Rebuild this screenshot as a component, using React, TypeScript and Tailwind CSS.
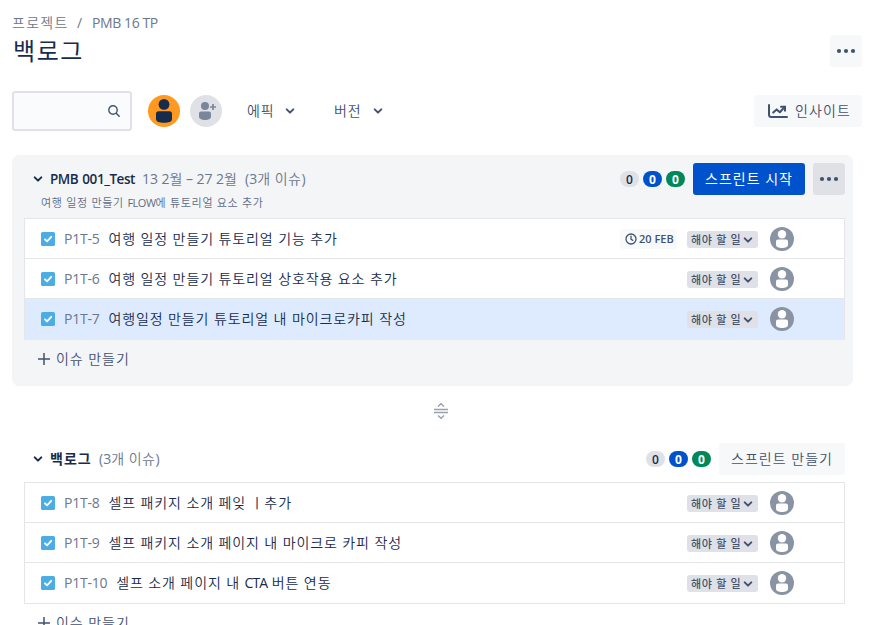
import React from 'react';
import clsx from 'clsx';

interface Issue {
  id: string;
  title: React.ReactNode;
  due?: string;
  selected?: boolean;
}

const sprintIssues: Issue[] = [
  { id: 'P1T-5', title: '여행 일정 만들기 튜토리얼 기능 추가', due: '20 FEB' },
  { id: 'P1T-6', title: '여행 일정 만들기 튜토리얼 상호작용 요소 추가' },
  { id: 'P1T-7', title: '여행일정 만들기 튜토리얼 내 마이크로카피 작성', selected: true },
];

const backlogIssues: Issue[] = [
  { id: 'P1T-8', title: '셀프 패키지 소개 페잊 ㅣ추가' },
  { id: 'P1T-9', title: '셀프 패키지 소개 페이지 내 마이크로 카피 작성' },
  {
    id: 'P1T-10',
    title: (
      <>
        셀프 소개 페이지 내 <span className="font-normal tracking-[-0.9px]">CTA</span> 버튼 연동
      </>
    ),
  },
];

const Chevron = ({ className }: { className?: string }) => (
  <svg viewBox="0 0 10 10" className={clsx('h-[10px] w-[10px] shrink-0', className)} fill="none" stroke="currentColor" strokeWidth="2" strokeLinecap="round" strokeLinejoin="round">
    <path d="M1.7 3.4 5 6.6l3.3-3.2" />
  </svg>
);

const Dots = () => (
  <svg viewBox="0 0 20 6" className="h-[6px] w-[20px]" fill="currentColor">
    <circle cx="3" cy="3" r="2.1" />
    <circle cx="10" cy="3" r="2.1" />
    <circle cx="17" cy="3" r="2.1" />
  </svg>
);

const CheckIcon = () => (
  <svg viewBox="0 0 14 14" className="h-[14px] w-[14px] shrink-0">
    <rect width="14" height="14" rx="1.6" fill="#4bade8" />
    <path d="M4 7.3 6.1 9.4 10.2 4.8" fill="none" stroke="#fff" strokeWidth="1.9" strokeLinecap="round" strokeLinejoin="round" />
  </svg>
);

const Assignee = () => (
  <svg viewBox="0 0 24 24" className="h-6 w-6 shrink-0">
    <circle cx="12" cy="12" r="12" fill="#8993a4" />
    <circle cx="12" cy="7.2" r="4.2" fill="#fff" />
    <path d="M6 14.7c0-1.3.9-2.1 2.2-2.1h7.6c1.3 0 2.2.8 2.2 2.1v3c0 2.2-2.7 3.3-6 3.3s-6-1.1-6-3.3z" fill="#fff" />
  </svg>
);

const Counters = () => (
  <div className="flex gap-[4px] text-[12px] leading-[17px] font-bold">
    <span className="h-4 w-[19px] rounded-full bg-[#dfe1e6] text-center font-semibold text-[#172b4d]">0</span>
    <span className="h-4 w-[19px] rounded-full bg-[#0052cc] text-center text-white">0</span>
    <span className="h-4 w-[19px] rounded-full bg-[#00875a] text-center text-white">0</span>
  </div>
);

const StatusButton = () => (
  <div className="mt-px flex h-[17px] w-[71px] shrink-0 items-center rounded-[3px] bg-[#dfe1e6] pl-[4px] text-[11px] font-medium text-[#42526e]">
    <span className="w-[52px] pt-px tracking-[0.7px] whitespace-nowrap">해야 할 일</span>
    <Chevron className="mt-px" />
  </div>
);

const IssueRow = ({ issue }: { issue: Issue }) => (
  <div
    className={clsx(
      'flex h-[40px] items-center border-b border-[#e4e6ea] pr-[50px] pl-[16px] last:border-b-0',
      issue.selected ? 'bg-[#deebff]' : 'bg-white'
    )}
  >
    <CheckIcon />
    <span className="ml-[9px] text-[14px] font-normal tracking-[-0.25px] text-[#6b778c]">{issue.id}</span>
    <span className="ml-[9px] grow text-[14px] tracking-[0.9px] whitespace-nowrap text-[#172b4d]">{issue.title}</span>
    {issue.due && (
      <div className="mr-[10px] flex h-[20px] w-[57px] items-center gap-[2px] rounded-[3px] bg-[#f7f9fa] pl-[5px] text-[11px] font-semibold text-[#42526e]">
        <svg viewBox="0 0 12 12" className="h-[12px] w-[12px] shrink-0" fill="none" stroke="currentColor" strokeWidth="1.3" strokeLinecap="round">
          <circle cx="6" cy="6" r="5" />
          <path d="M6 3.2V6.2L7.8 7.4" />
        </svg>
        <span className="whitespace-nowrap">{issue.due}</span>
      </div>
    )}
    <StatusButton />
    <div className="ml-[12px]">
      <Assignee />
    </div>
  </div>
);

const IssueList = ({ issues }: { issues: Issue[] }) => (
  <div className={clsx('border border-[#e4e6ea]', issues[issues.length - 1].selected && 'border-b-[#deebff]')}>
    {issues.map((issue) => (
      <IssueRow key={issue.id} issue={issue} />
    ))}
  </div>
);

const IssueCount = () => (
  <span className="ml-[7px] tracking-[0.5px] whitespace-nowrap text-[#6b778c]">
    <span className="font-normal tracking-[0px]">(3</span>개 이슈<span className="font-normal">)</span>
  </span>
);

const CreateIssue = () => (
  <div className="flex h-[38px] items-center gap-[6px] pl-[14px] text-[14px] text-[#42526e]">
    <svg viewBox="0 0 12 12" className="h-[12px] w-[12px]" stroke="currentColor" strokeWidth="1.5">
      <path d="M6 0v12M0 6h12" />
    </svg>
    <span className="tracking-[0.95px]">이슈 만들기</span>
  </div>
);

const App: React.FC = () => {
  return (
    <div className="h-[625px] w-[875px] overflow-hidden bg-white pl-[12px] font-['Open_Sans','Noto_Sans_CJK_KR',sans-serif] leading-5 font-[350] text-[#42526e]">
      <header className="flex h-[75px] justify-between pr-[13px]">
        <div className="pt-[13px]">
          <div className="flex h-[20px] items-center text-[14px] text-[#6b778c]">
            <span className="w-[56px] tracking-[1.3px] whitespace-nowrap">프로젝트</span>
            <span className="ml-[9px] w-[15px] font-normal">/</span>
            <span className="text-[14px] font-normal tracking-[-0.4px]">PMB 16 TP</span>
          </div>
          <h1 className="mt-[4px] ml-px text-[24px] leading-[28px] font-normal tracking-[1.6px] text-[#172b4d]">백로그</h1>
        </div>
        <button className="mt-[35px] flex h-[32px] w-[32px] items-center justify-center rounded-[3px] bg-[#f6f8fa]">
          <Dots />
        </button>
      </header>

      <div className="flex h-[80px] items-center pr-[13px] pb-[8px]">
        <div className="flex h-[40px] w-[120px] items-center justify-end rounded-[3px] border-2 border-[#dfe1e6] bg-[#fafbfc] pr-[10px]">
          <svg viewBox="0 0 12 12" className="h-[12px] w-[12px]" fill="none" stroke="currentColor" strokeWidth="1.4" strokeLinecap="round">
            <circle cx="5" cy="5" r="4.2" />
            <path d="M8.2 8.2 11.2 11.2" />
          </svg>
        </div>
        <svg viewBox="0 0 32 32" className="ml-[16px] h-8 w-8">
          <circle cx="16" cy="16" r="16" fill="#ff991f" />
          <circle cx="16" cy="9.4" r="5.4" fill="#172b4d" />
          <path d="M8 18.6c0-1.5 1-2.4 2.5-2.4h11c1.5 0 2.5.9 2.5 2.4v5.6c0 2.3-3.6 3.6-8 3.6s-8-1.3-8-3.6z" fill="#172b4d" />
        </svg>
        <svg viewBox="0 0 32 32" className="ml-[10px] h-8 w-8">
          <circle cx="16" cy="16" r="16" fill="#dfe1e6" />
          <circle cx="15" cy="11" r="4" fill="#7a869a" />
          <path d="M9 18.4c0-1.3.8-2 2-2h8c1.2 0 2 .7 2 2v3.4c0 2-2.5 3.2-6 3.2s-6-1.2-6-3.2z" fill="#7a869a" />
          <path d="M23 9v6M20 12h6" stroke="#7a869a" strokeWidth="1.7" />
        </svg>
        <div className="ml-[25px] flex w-[87px] items-center text-[14px]">
          <span className="w-[38px] tracking-[0.9px]">에픽</span>
          <Chevron />
        </div>
        <div className="flex items-center text-[14px]">
          <span className="w-[39px] tracking-[0.9px]">버전</span>
          <Chevron />
        </div>
        <button className="ml-auto flex h-[32px] w-[108px] items-center rounded-[3px] bg-[#f6f8fa] pl-[14px] text-[14px]">
          <svg viewBox="0 0 20 14" className="h-[14px] w-[20px]" fill="none" stroke="currentColor" strokeWidth="2" strokeLinecap="round" strokeLinejoin="round">
            <path d="M1 1v9.5c0 1.5.8 2.5 2.3 2.5H19" />
            <path d="M5.2 8.6 8.7 5.4 11.8 8.2 16.5 3.2" />
            <path d="M13 2.7h4v4" strokeLinejoin="miter" />
          </svg>
          <span className="ml-[7px] tracking-[1.1px] whitespace-nowrap">인사이트</span>
        </button>
      </div>

      <section className="h-[231px] w-[841px] rounded-[7px] bg-[#f4f5f7] pr-[8px] pl-[12px]">
        <div className="h-[63px] pt-[8px]">
          <div className="flex h-[32px] items-center text-[14px]">
            <Chevron className="ml-[9px] text-[#172b4d]" />
            <span className="ml-[7px] w-[85px] text-[13.5px] font-semibold tracking-[-0.45px] whitespace-nowrap text-[#172b4d] [word-spacing:1px]">PMB 001_Test</span>
            <span className="ml-[7px] w-[96px] font-normal tracking-[-0.05px] whitespace-nowrap text-[#6b778c]">
              13 2<span className="font-[350]">월</span> – 27 2<span className="font-[350]">월</span>
            </span>
            <IssueCount />
            <div className="ml-auto">
              <Counters />
            </div>
            <button className="ml-[8px] h-[32px] w-[112px] rounded-[3px] bg-[#0052cc] text-center font-normal tracking-[1px] text-white">스프린트 시작</button>
            <button className="ml-[8px] flex h-[32px] w-[32px] items-center justify-center rounded-[3px] bg-[#dfe1e6]">
              <Dots />
            </button>
          </div>
          <p className="ml-[17px] h-[16px] text-[11px] leading-[16px] tracking-[0.7px] text-[#5e6c84]">
            여행 일정 만들기 <span className="font-normal tracking-[-0.5px]">FLOW</span>에 튜토리얼 요소 추가
          </p>
        </div>
        <IssueList issues={sprintIssues} />
        <CreateIssue />
      </section>

      <div className="flex h-[49px] w-[858px] items-center justify-center">
        <svg viewBox="0 0 16 18" className="h-[18px] w-[16px]" fill="none" stroke="#97a0af" strokeWidth="1.4">
          <path d="M5 4.5 8 1.7l3 2.8M1 7.5h14M1 10.5h14M5 13.5l3 2.8 3-2.8" />
        </svg>
      </div>

      <section className="w-[841px] pt-[8px] pr-[8px] pl-[12px]">
        <div className="mb-[7px] flex h-[32px] items-center text-[14px]">
          <Chevron className="ml-[9px] text-[#172b4d]" />
          <span className="ml-[7px] w-[42px] font-semibold tracking-[1px] whitespace-nowrap text-[#172b4d]">백로그</span>
          <IssueCount />
          <div className="ml-auto">
            <Counters />
          </div>
          <button className="ml-[8px] h-[32px] w-[126px] rounded-[3px] bg-[#f6f8fa] tracking-[1px]">스프린트 만들기</button>
        </div>
        <IssueList issues={backlogIssues} />
        <CreateIssue />
      </section>
    </div>
  );
};

export default App;
